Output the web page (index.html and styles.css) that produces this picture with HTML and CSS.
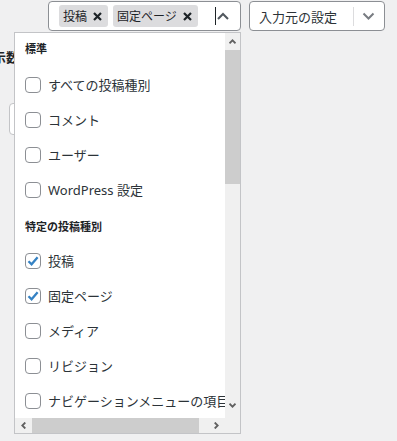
FILE: index.html
```html
<!DOCTYPE html>
<html lang="ja">
<head>
  <meta charset="UTF-8">
  <meta name="viewport" content="width=device-width, initial-scale=1.0">
  <title>投稿種別の選択</title>
  <link rel="stylesheet" href="styles.css">
</head>
<body>
  <div class="top-bar">
    <div class="combo">
      <span class="tag">投稿<svg class="tag-x" width="9" height="9" viewBox="0 0 9 9"><path d="M1 1L8 8M8 1L1 8"/></svg></span>
      <span class="tag">固定ページ<svg class="tag-x" width="9" height="9" viewBox="0 0 9 9"><path d="M1 1L8 8M8 1L1 8"/></svg></span>
      <span class="combo-indicator">
        <span class="caret"></span>
        <svg class="chevron-up" width="12" height="8" viewBox="0 0 12 8"><path d="M1 7L6 2L11 7"/></svg>
      </span>
    </div>
    <div class="select">
      <span>入力元の設定</span>
      <span class="select-sep"></span>
      <svg class="chevron-down" width="13" height="8" viewBox="0 0 13 8"><path d="M1.5 1.5L6.5 6.5L11.5 1.5"/></svg>
    </div>
  </div>

  <!-- 後ろに隠れている設定欄 -->
  <div class="behind">
    <div class="behind-label">表示数</div>
    <div class="behind-field"></div>
  </div>

  <div class="dropdown">
    <div class="dropdown-list">
      <div class="group">
        <div class="group-title">標準</div>
        <label class="option"><span class="box"></span>すべての投稿種別</label>
        <label class="option"><span class="box"></span>コメント</label>
        <label class="option"><span class="box"></span>ユーザー</label>
        <label class="option"><span class="box"></span>WordPress 設定</label>
      </div>
      <div class="group">
        <div class="group-title">特定の投稿種別</div>
        <label class="option"><span class="box checked"><svg width="16" height="16" viewBox="0 0 16 16"><path d="M3.5 8.2L6.6 11.3L12.6 4.3"/></svg></span>投稿</label>
        <label class="option"><span class="box checked"><svg width="16" height="16" viewBox="0 0 16 16"><path d="M3.5 8.2L6.6 11.3L12.6 4.3"/></svg></span>固定ページ</label>
        <label class="option"><span class="box"></span>メディア</label>
        <label class="option"><span class="box"></span>リビジョン</label>
        <label class="option"><span class="box"></span>ナビゲーションメニューの項目</label>
      </div>
    </div>
    <div class="vscroll">
      <span class="arrow"><svg width="7" height="5" viewBox="0 0 7 5"><path d="M0.5 4.3L3.5 1.3L6.5 4.3"/></svg></span>
      <span class="vthumb"></span>
      <span class="arrow arrow-bottom"><svg width="7" height="5" viewBox="0 0 7 5"><path d="M0.5 0.7L3.5 3.7L6.5 0.7"/></svg></span>
    </div>
    <div class="hscroll">
      <span class="arrow"><svg width="5" height="7" viewBox="0 0 5 7"><path d="M4.3 0.5L1.3 3.5L4.3 6.5"/></svg></span>
      <span class="hthumb"></span>
      <span class="arrow arrow-right"><svg width="5" height="7" viewBox="0 0 5 7"><path d="M0.7 0.5L3.7 3.5L0.7 6.5"/></svg></span>
    </div>
    <div class="corner"></div>
  </div>
</body>
</html>
```

FILE: styles.css
```css
body {
  margin: 0;
  height: 441px;
  overflow: hidden;
  position: relative;
  background-color: #f0f0f1;
  font-family: "Noto Sans", "Noto Sans CJK JP", sans-serif;
  font-size: 13px;
  color: #2c3338;
}
.top-bar {
  display: flex;
  gap: 8px;
  padding: 1px 0 0 48px;
}
.combo {
  box-sizing: border-box;
  width: 193px;
  height: 30px;
  display: flex;
  align-items: center;
  gap: 5px;
  padding-left: 10px;
  background-color: #fff;
  border: 1px solid #8c8f94;
  border-radius: 4px;
}
.tag {
  display: flex;
  align-items: center;
  height: 22px;
  padding: 0 6px 0 4px;
  gap: 6px;
  font-size: 12px;
  color: #1d2327;
  background-color: #dcdcde;
  border-radius: 3px;
}
.tag-x path {
  stroke: #1d2327;
  stroke-width: 2.2;
  fill: none;
}
.combo-indicator {
  display: flex;
  align-items: center;
  margin-left: auto;
  padding-right: 11px;
}
.caret {
  width: 1px;
  height: 18px;
  margin-right: 1px;
  background-color: #1d2327;
}
.chevron-up path {
  stroke: #50575e;
  stroke-width: 2;
  fill: none;
}
.select {
  box-sizing: border-box;
  width: 136px;
  height: 30px;
  display: flex;
  align-items: center;
  padding-left: 9px;
  background-color: #fff;
  border: 1px solid #8c8f94;
  border-radius: 4px;
  color: #2c3338;
}
.select-sep {
  width: 1px;
  height: 19px;
  margin-left: auto;
  background-color: #dcdcde;
}
.chevron-down {
  margin: 0 9px 0 8px;
}
.chevron-down path {
  stroke: #787c82;
  stroke-width: 2;
  fill: none;
}
.behind {
  padding-top: 18px;
}
.behind-label {
  margin-left: -20px;
  line-height: 16px;
  font-weight: 700;
  color: #1d2327;
}
.behind-field {
  width: 200px;
  height: 30px;
  margin: 38px 0 0 9px;
  background-color: #fff;
  border: 1px solid #c3c4c7;
  border-radius: 4px;
}
.dropdown {
  position: absolute;
  left: 14px;
  top: 32px;
  display: grid;
  grid-template-columns: 210px 15px;
  grid-template-rows: 385px 15px;
  background-color: #fff;
  border: 1px solid #c3c4c7;
}
.dropdown-list {
  overflow: hidden;
  white-space: nowrap;
}
.group-title {
  padding: 14px 10px 10px;
  line-height: 12px;
  font-size: 11px;
  font-weight: 700;
  color: #1d2327;
}
.group:first-child .group-title {
  padding: 10px 10px 12px;
}
.option {
  display: flex;
  align-items: center;
  gap: 7px;
  height: 35px;
  padding-left: 10px;
}
.box {
  box-sizing: border-box;
  flex: none;
  width: 16px;
  height: 16px;
  display: flex;
  background-color: #fff;
  border: 1px solid #8c8f94;
  border-radius: 4px;
}
.box svg {
  margin: -1px;
}
.box path {
  stroke: #3582c4;
  stroke-width: 2.3;
  fill: none;
}
.vscroll, .hscroll, .corner {
  background-color: #f0f0f0;
  display: flex;
}
.vscroll {
  flex-direction: column;
}
.arrow {
  flex: none;
  display: flex;
  align-items: center;
  justify-content: center;
  width: 15px;
  height: 17px;
}
.arrow path {
  stroke: #606060;
  stroke-width: 1.8;
  fill: none;
}
.arrow-bottom {
  margin-top: auto;
  padding-bottom: 4px;
}
.vthumb {
  height: 134px;
  background-color: #cdcdcd;
}
.hscroll .arrow {
  width: 17px;
  height: 15px;
}
.hthumb {
  width: 167px;
  background-color: #cdcdcd;
}
.arrow-right {
  margin-left: auto;
}
```
